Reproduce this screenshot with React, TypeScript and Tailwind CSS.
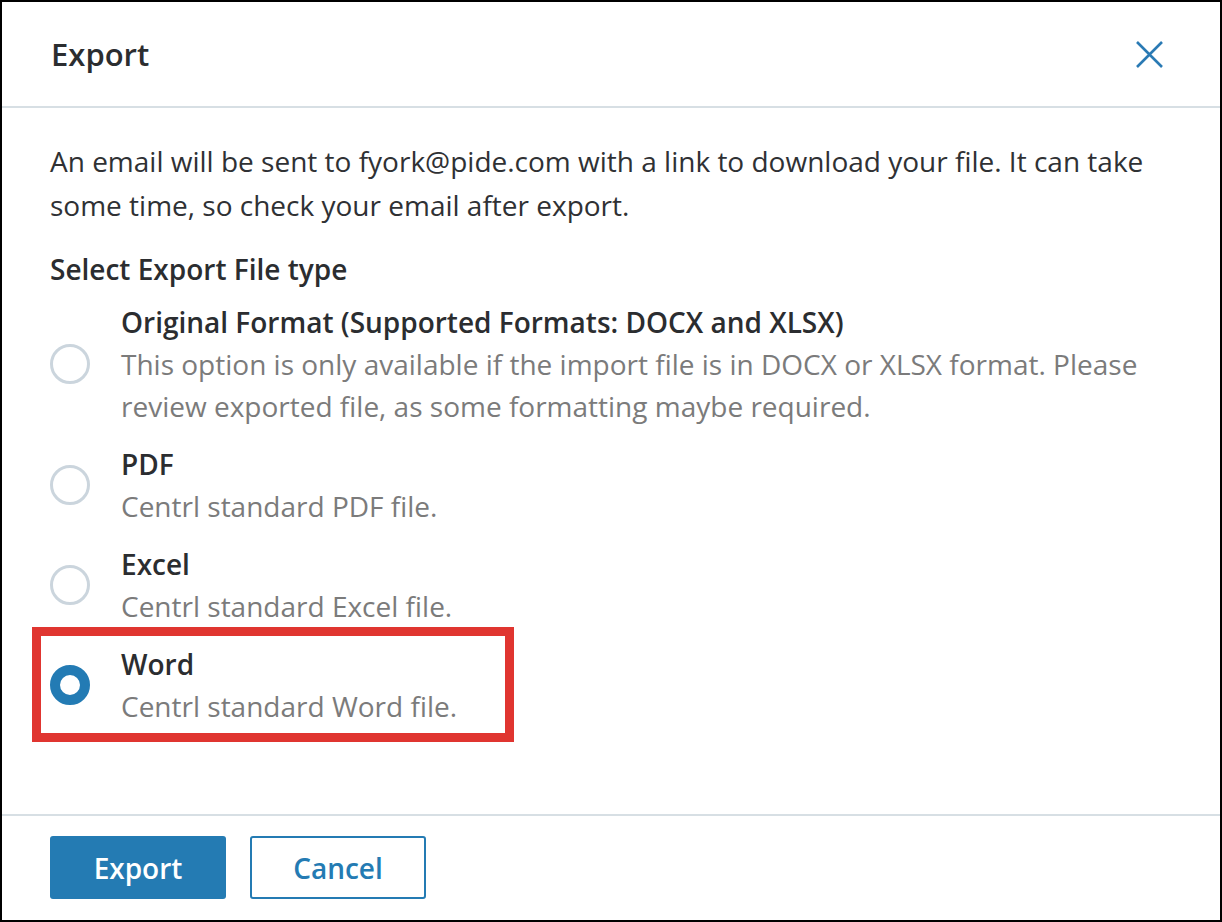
const options = [
  {
    title: "Original Format (Supported Formats: DOCX and XLSX)",
    desc: "This option is only available if the import file is in DOCX or XLSX format. Please review exported file, as some formatting maybe required.",
  },
  { title: "PDF", desc: "Centrl standard PDF file." },
  { title: "Excel", desc: "Centrl standard Excel file." },
  { title: "Word", desc: "Centrl standard Word file." },
];

function Radio({ checked }: { checked: boolean }) {
  return checked ? (
    <span className="block w-[40px] h-[40px] shrink-0 rounded-full border-[10px] border-[#237bb4] bg-white" />
  ) : (
    <span className="block w-[40px] h-[40px] shrink-0 rounded-full border-[3px] border-[#cbd5dd] bg-white" />
  );
}

export default function App() {
  const selected = 3;
  return (
    <div
      className="w-[1222px] h-[922px] border-2 border-black bg-white flex flex-col text-[#2b2d30]"
      style={{ fontFamily: '"Open Sans", "Noto Sans", sans-serif' }}
    >
      <div className="h-[106px] shrink-0 flex items-center justify-between pl-[49px] pr-[57px] border-b-2 border-[#d7dfe4]">
        <h1 className="text-[31px] font-semibold">Export</h1>
        <button className="text-[#2a7ab4]">
          <svg width="27" height="27" viewBox="0 0 27 27" fill="none" stroke="currentColor" strokeWidth="2.6">
            <path d="M1 1L26 26M26 1L1 26" />
          </svg>
        </button>
      </div>

      <div className="flex-1 px-[48px] pt-[31px]">
        <p className="text-[28px] leading-[44px] text-[#2f3134]">
          An email will be sent to fyork@pide.com with a link to download your file. It can take some time, so check your email after export.
        </p>
        <h2 className="mt-[20px] text-[28px] leading-[44px] font-semibold">Select Export File type</h2>
        <div className="mt-[10px] flex flex-col gap-[16px]">
          {options.map((o, i) => (
            <div key={o.title} className="relative flex items-center gap-[31px]">
              {i === selected && (
                <div className="absolute -left-[18px] -top-[16px] -bottom-[15px] w-[482px] border-[9px] border-[#e03530]" />
              )}
              <Radio checked={i === selected} />
              <div className="text-[28px] leading-[42px]">
                <div className="font-semibold">{o.title}</div>
                <div className="text-[#7b7b7b]">{o.desc}</div>
              </div>
            </div>
          ))}
        </div>
      </div>

      <div className="h-[106px] shrink-0 border-t-2 border-[#d7dfe4] px-[48px] pt-[20px] flex gap-[24px]">
        <button className="w-[176px] h-[63px] rounded-[3px] bg-[#247bb3] text-white text-[28px] font-semibold">
          Export
        </button>
        <button className="w-[176px] h-[63px] rounded-[3px] border-2 border-[#247bb3] text-[#247bb3] text-[28px] font-semibold">
          Cancel
        </button>
      </div>
    </div>
  );
}
